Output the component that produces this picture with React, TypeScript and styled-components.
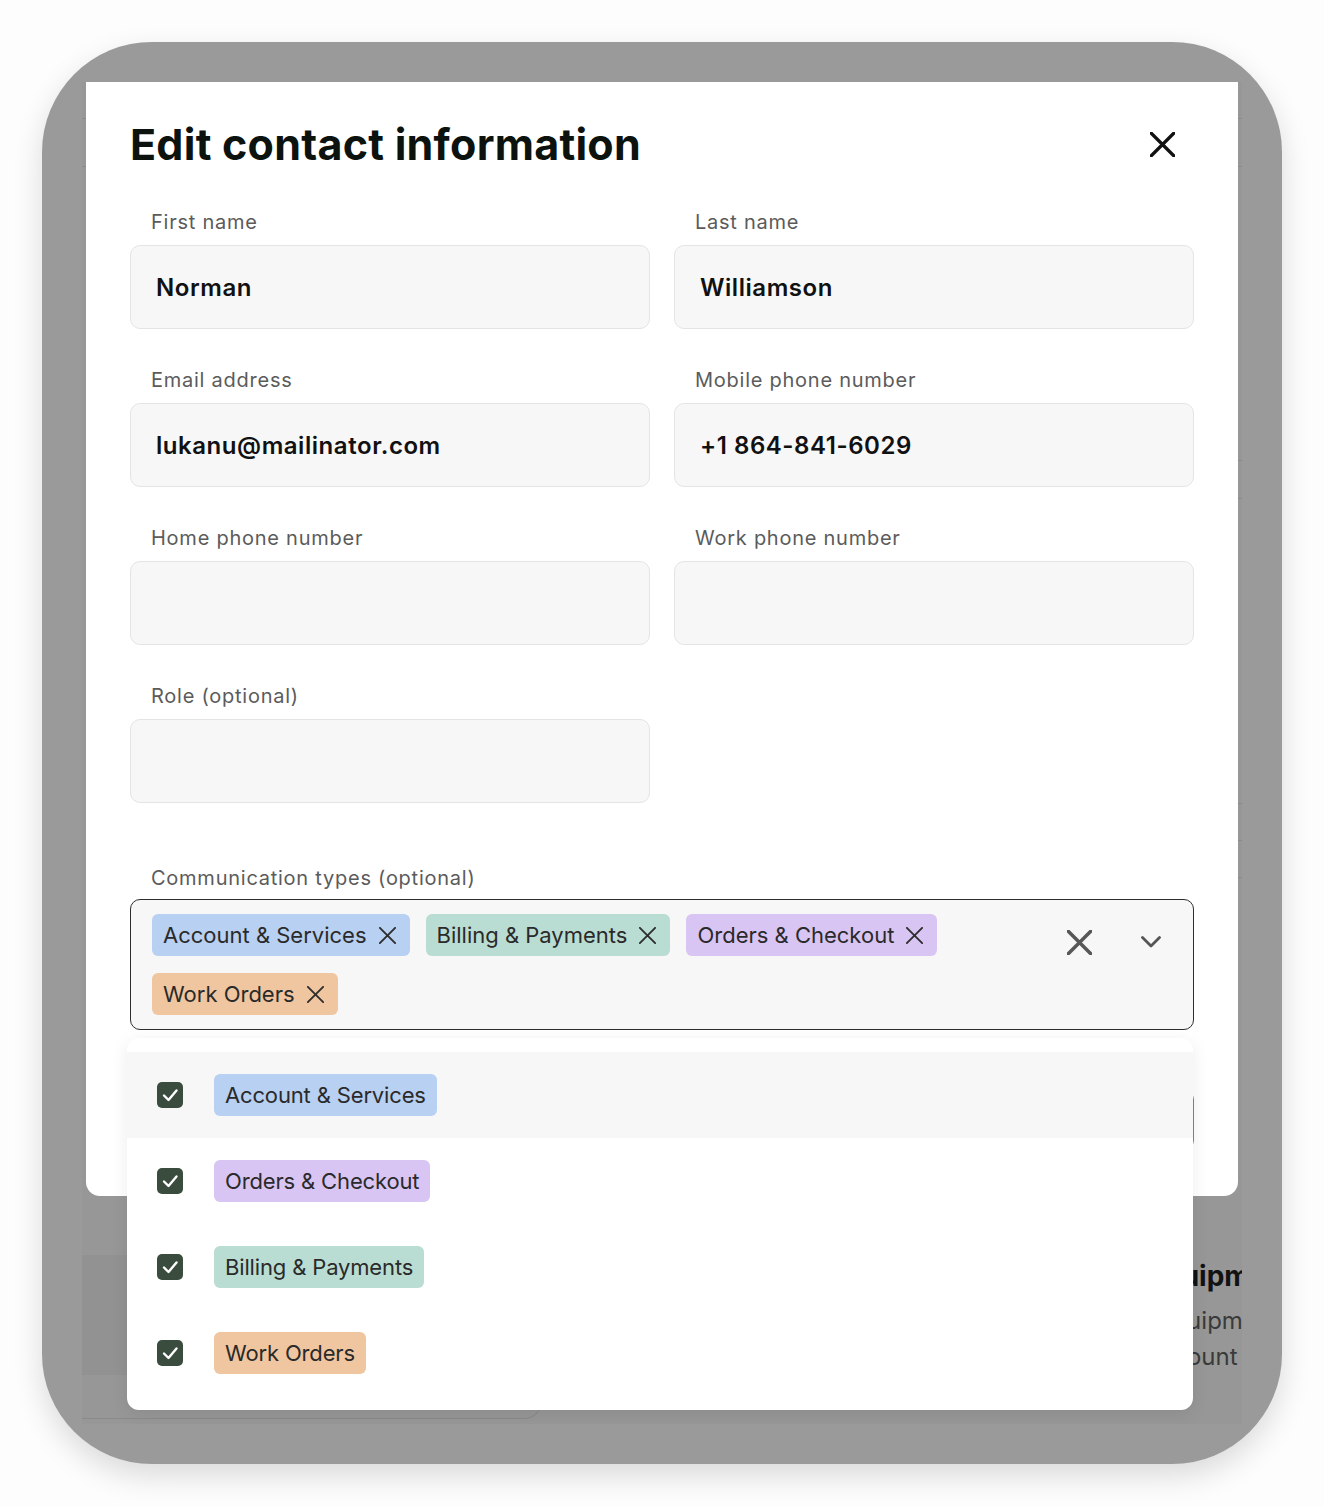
import React from "react";
import styled, { createGlobalStyle } from "styled-components";

type Tone = "blue" | "green" | "purple" | "orange";

interface Category {
  label: string;
  tone: Tone;
}

const toneColors: Record<Tone, string> = {
  blue: "#b8d0f1",
  green: "#b9ddd3",
  purple: "#d9c5f3",
  orange: "#f0c6a0",
};

const selected: Category[] = [
  { label: "Account & Services", tone: "blue" },
  { label: "Billing & Payments", tone: "green" },
  { label: "Orders & Checkout", tone: "purple" },
  { label: "Work Orders", tone: "orange" },
];

const options: Category[] = [
  { label: "Account & Services", tone: "blue" },
  { label: "Orders & Checkout", tone: "purple" },
  { label: "Billing & Payments", tone: "green" },
  { label: "Work Orders", tone: "orange" },
];

const fields = [
  { label: "First name", value: "Norman" },
  { label: "Last name", value: "Williamson" },
  { label: "Email address", value: "lukanu@mailinator.com" },
  { label: "Mobile phone number", value: "+1 864-841-6029" },
  { label: "Home phone number", value: "" },
  { label: "Work phone number", value: "" },
  { label: "Role (optional)", value: "" },
];

const CrossIcon = ({ size, stroke, color }: { size: number; stroke: number; color: string }) => (
  <svg width={size} height={size} viewBox="0 0 20 20" fill="none">
    <path d="M1 1L19 19M19 1L1 19" stroke={color} strokeWidth={stroke} strokeLinecap="round" />
  </svg>
);

const ChevronIcon = () => (
  <svg width="20" height="12" viewBox="0 0 20 12" fill="none">
    <path d="M1.5 1.5L10 10L18.5 1.5" stroke="#555" strokeWidth="2.8" strokeLinecap="round" strokeLinejoin="round" />
  </svg>
);

const CheckIcon = () => (
  <svg width="26" height="26" viewBox="0 0 26 26" fill="none">
    <path d="M7 13.5L11.5 18L19.5 8.5" stroke="#fff" strokeWidth="2.4" strokeLinecap="round" strokeLinejoin="round" />
  </svg>
);

const App: React.FC = () => {
  return (
    <>
      <GlobalStyle />
      <Page>
        <Frame>
          <Screen>
            <BehindPage>
              <TopRow $height={37} />
              <TopRow $height={48} />
              <SideList>
                <SideLine $offset={294} />
                <SideLine $offset={38} />
                <SideLine $offset={305} />
                <SideLine $offset={37} />
                <SideLine $offset={37} />
              </SideList>
              <BottomSection>
                <Card>
                  <CardBlock />
                </Card>
                <Panel>
                  <PanelTitle>Equipment</PanelTitle>
                  <PanelText $indent={14}>Equipment on this</PanelText>
                  <PanelText $indent={2}>account</PanelText>
                </Panel>
              </BottomSection>
            </BehindPage>

            <Modal>
              <Header>
                <Title>Edit contact information</Title>
                <CloseButton aria-label="Close">
                  <CrossIcon size={25} stroke={2.6} color="#111" />
                </CloseButton>
              </Header>

              <FormGrid>
                {fields.map((f) => (
                  <Field key={f.label}>
                    <Label>{f.label}</Label>
                    <InputBox>{f.value}</InputBox>
                  </Field>
                ))}
              </FormGrid>

              <Section>
                <Label>Communication types (optional)</Label>
                <SelectWrap>
                  <Select>
                    <ChipList>
                      {selected.map((c) => (
                        <Chip key={c.label} $tone={c.tone} $removable>
                          {c.label}
                          <CrossIcon size={17} stroke={2.2} color="#2e2e2e" />
                        </Chip>
                      ))}
                    </ChipList>
                    <Indicators>
                      <IndicatorButton>
                        <CrossIcon size={25} stroke={2.8} color="#575757" />
                      </IndicatorButton>
                      <IndicatorButton>
                        <ChevronIcon />
                      </IndicatorButton>
                    </Indicators>
                  </Select>

                  <Menu>
                    {options.map((o, i) => (
                      <Option key={o.label} $active={i === 0}>
                        <Checkbox>
                          <CheckIcon />
                        </Checkbox>
                        <MenuChip $tone={o.tone}>{o.label}</MenuChip>
                      </Option>
                    ))}
                  </Menu>
                </SelectWrap>
              </Section>

              <Footer>
                <GhostButton>Cancel</GhostButton>
                <SaveButton>Save</SaveButton>
              </Footer>
            </Modal>
          </Screen>
        </Frame>
      </Page>
    </>
  );
};

const GlobalStyle = createGlobalStyle`
  * {
    box-sizing: border-box;
  }
  body {
    margin: 0;
    background: #fdfdfd;
    font-family: Inter, "Noto Sans", sans-serif;
  }
`;

const Page = styled.div`
  padding: 42px;
`;

const Frame = styled.div`
  width: 1240px;
  height: 1422px;
  padding: 40px;
  border-radius: 110px;
  background: #9a9a9a;
  box-shadow: 0 12px 30px rgba(0, 0, 0, 0.14);
`;

const Screen = styled.div`
  position: relative;
  height: 100%;
  overflow: hidden;
  background: #979797;
`;

const BehindPage = styled.div`
  display: flex;
  flex-direction: column;
  height: 100%;
`;

const TopRow = styled.div<{ $height: number }>`
  height: ${(p) => p.$height}px;
  border-bottom: 1px solid #8c8c8c;
`;

const SideList = styled.div`
  display: flex;
  flex-direction: column;
  align-items: flex-end;
`;

const SideLine = styled.div<{ $offset: number }>`
  width: 300px;
  margin-top: ${(p) => p.$offset - 1}px;
  border-bottom: 1px solid #8c8c8c;
`;

const BottomSection = styled.div`
  margin-top: auto;
  display: grid;
  grid-template-columns: 1062px 1fr;
  height: 169px;
`;

const Card = styled.div`
  width: 460px;
  height: 164px;
  border-bottom: 1px solid #8a8a8a;
  border-right: 1px solid #8a8a8a;
  border-bottom-right-radius: 18px;
`;

const CardBlock = styled.div`
  width: 508px;
  height: 120px;
  background: #929292;
`;

const Panel = styled.div`
  padding-top: 4px;
  white-space: nowrap;
`;

const PanelTitle = styled.div`
  padding-left: 3px;
  margin-bottom: 10px;
  font-size: 28px;
  line-height: 34px;
  font-weight: 700;
  color: #121212;
`;

const PanelText = styled.div<{ $indent: number }>`
  padding-left: ${(p) => p.$indent}px;
  font-size: 24px;
  line-height: 36px;
  color: #3a3a3a;
`;

const Modal = styled.div`
  position: absolute;
  top: 0;
  left: 4px;
  z-index: 5;
  width: 1152px;
  height: 1114px;
  padding: 37px 44px 0;
  background: #fff;
  border-radius: 0 0 14px 14px;
`;

const Header = styled.div`
  display: flex;
  align-items: center;
  justify-content: space-between;
`;

const Title = styled.h2`
  margin: 0;
  font-size: 43px;
  line-height: 50px;
  font-weight: 700;
  letter-spacing: 0.25px;
  color: #0c120e;
`;

const CloseButton = styled.button`
  display: flex;
  align-items: center;
  justify-content: center;
  width: 40px;
  height: 40px;
  margin-right: 12px;
  padding: 0;
  border: none;
  background: none;
  cursor: pointer;
`;

const FormGrid = styled.div`
  display: grid;
  grid-template-columns: 1fr 1fr;
  column-gap: 24px;
  row-gap: 39px;
  margin-top: 41px;
`;

const Field = styled.div`
  display: flex;
  flex-direction: column;
`;

const Label = styled.label`
  display: block;
  padding-left: 21px;
  margin-bottom: 11px;
  font-size: 20px;
  line-height: 24px;
  letter-spacing: 0.75px;
  color: #5b5b5b;
`;

const InputBox = styled.div`
  display: flex;
  align-items: center;
  height: 84px;
  padding: 0 25px;
  border: 1px solid #e4e4e4;
  border-radius: 10px;
  background: #f7f7f7;
  font-size: 24px;
  font-weight: 600;
  letter-spacing: 0.55px;
  color: #111;
`;

const Section = styled.div`
  margin-top: 63px;

  & > label {
    margin-bottom: 9px;
  }
`;

const SelectWrap = styled.div`
  position: relative;
`;

const Select = styled.div`
  display: flex;
  align-items: flex-start;
  min-height: 130px;
  padding: 14px 22px 14px 21px;
  border: 1px solid #2e2e2e;
  border-radius: 10px;
  background: #f7f7f7;
`;

const ChipList = styled.div`
  flex: 1;
  display: flex;
  flex-wrap: wrap;
  gap: 17px 16px;
  padding-right: 110px;
`;

const Chip = styled.span<{ $tone: Tone; $removable?: boolean }>`
  display: inline-flex;
  align-items: center;
  gap: 12px;
  height: 42px;
  padding: ${(p) => (p.$removable ? "0 14px 0 11px" : "0 11px")};
  border-radius: 6px;
  background: ${(p) => toneColors[p.$tone]};
  font-size: 22px;
  color: #2a2a2a;
  white-space: nowrap;
`;

const MenuChip = styled(Chip)`
  letter-spacing: -0.15px;
`;

const Indicators = styled.div`
  display: flex;
  align-items: center;
  gap: 32px;
  height: 42px;
  margin-top: 7px;
`;

const IndicatorButton = styled.span`
  display: flex;
  align-items: center;
  justify-content: center;
  width: 40px;
  height: 40px;
`;

const Menu = styled.div`
  position: absolute;
  top: calc(100% + 8px);
  left: -3px;
  z-index: 10;
  width: 1066px;
  padding: 14px 0;
  border-radius: 12px;
  background: #fff;
  box-shadow: 0 4px 18px rgba(0, 0, 0, 0.08);
`;

const Option = styled.div<{ $active?: boolean }>`
  display: flex;
  align-items: center;
  gap: 31px;
  height: 86px;
  padding-left: 30px;
  background: ${(p) => (p.$active ? "#f7f7f7" : "#fff")};
`;

const Checkbox = styled.span`
  display: flex;
  width: 26px;
  height: 26px;
  border-radius: 5px;
  background: #3a4c3e;
`;

const Footer = styled.div`
  display: flex;
  justify-content: flex-end;
  gap: 16px;
  margin-top: 60px;
`;

const GhostButton = styled.button`
  height: 60px;
  padding: 0 28px;
  border: 1px solid #cfcfcf;
  border-radius: 10px;
  background: #fff;
  font-family: inherit;
  font-size: 20px;
  font-weight: 600;
  color: #222;
`;

const SaveButton = styled(GhostButton)`
  border-color: #7b897e;
  background: #3a4c3e;
  color: #fff;
`;

export default App;
